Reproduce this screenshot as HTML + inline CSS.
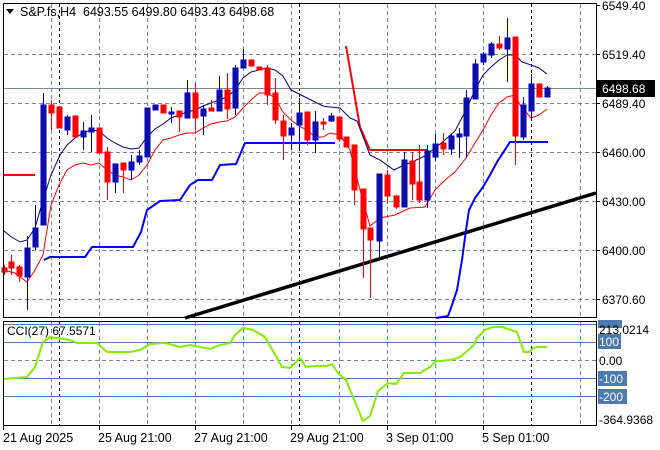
<!DOCTYPE html>
<html><head><meta charset="utf-8"><style>
html,body{margin:0;padding:0;background:#fff;}
svg{display:block;font-family:"Liberation Sans",Tahoma,sans-serif;}
</style></head><body>
<svg width="660" height="450" viewBox="0 0 660 450" xmlns="http://www.w3.org/2000/svg">
<rect width="660" height="450" fill="#fff"/>
<g stroke="#7a8694" stroke-width="1" stroke-dasharray="4,3" fill="none">
<path d="M4 54.5H596M4 103.5H596M4 152.5H596M4 201.5H596M4 250.5H596M4 299.5H596"/>
<path d="M51.5 4V317M99.5 4V317M147.5 4V317M195.5 4V317M243.5 4V317M291.5 4V317M339.5 4V317M387.5 4V317M435.5 4V317M483.5 4V317M580.5 4V317"/>
<path d="M51.5 322V425M99.5 322V425M147.5 322V425M195.5 322V425M243.5 322V425M291.5 322V425M339.5 322V425M387.5 322V425M435.5 322V425M483.5 322V425M580.5 322V425M4 360.5H596"/>
</g>
<g stroke="#000" stroke-width="1" stroke-dasharray="3,3" fill="none">
<path d="M59.5 4V317M299.5 4V317M531.5 4V317M59.5 322V425M299.5 322V425M531.5 322V425"/>
</g>
<path d="M4 88.5H596" stroke="#7a8694" stroke-width="1"/>
<path d="M185 318L596 193" stroke="#000" stroke-width="3.5"/>
<path d="M3 175H35M346 46L360 127L370 150L427 150" stroke="#f00" stroke-width="2" fill="none"/>
<path d="M44 260L50 257L85 257L92 247L133 247L141 232L147 210L160 201L180 200L190 185L198 180L212 180L220 165L236 164L245 143L335 143" stroke="#0000ff" stroke-width="2" fill="none"/>
<path d="M436 318L448 316L452 305L457 290L462 260L466 230L469 210L475 198L483 187L490 175L497 162L510 142L548 142" stroke="#0000ff" stroke-width="2" fill="none"/>
<path d="M3 230L10 236L20 242L27 240L35 228L43 200L51 175L60 155L67 145L75 138L83 133L91 130L99 131L107 138L115 143L123 147L131 149L139 148L147 137L155 129L163 124L171 118L179 115L187 112L195 110L203 106L211 103L219 100L227 97L235 90L243 78L251 72L259 70L267 68L275 70L283 76L291 90L299 94L307 98L315 102L323 106L330 107L340 108L350 118L357 121L370 155L380 160L394 170L402 166L412 162L425 156L435 148L445 140L455 131L466 110L475 90L483 75L491 67L499 60L507 55L515 55L522 62L531 65L539 68L547 74" stroke="#000080" stroke-width="1" fill="none"/>
<path d="M3 270L15 273L27 282L35 270L43 255L51 205L59 185L67 170L75 165L83 163L91 165L99 163L107 170L115 175L123 177L131 180L139 175L147 165L155 150L163 140L171 138L179 135L187 133L195 133L203 128L211 124L219 122L227 121L235 117L243 108L251 100L259 93L267 93L275 98L283 112L291 120L299 126L307 130L315 137L323 137L330 133L340 135L350 150L360 190L370 226L380 218L395 215L410 208L425 207L435 190L445 180L455 172L466 158L475 143L483 130L491 115L499 103L507 97L515 95L520 105L531 118L539 115L547 109" stroke="#f00" stroke-width="1" fill="none"/>
<g stroke="#f00" stroke-width="1" fill="#f00">
<path d="M4.5 265V275M11.5 255V275M19.5 265V282M51.5 100V130M59.5 107V128M75.5 116V137M99.5 128V153M107.5 147V200M123.5 163V193M163.5 105V113M179.5 111V132M195.5 83V130M211.5 100V111M227.5 73V119M251.5 60V66M259.5 67V70M267.5 65V105M275.5 78V124M283.5 115V160M307.5 112V145M323.5 118V130M339.5 117V142M346.5 137V147M354.5 145V205M363.5 189V278M370.5 228V298M387.5 170V203M396.5 195V209M412.5 152V200M419.5 145V203M443.5 133V155M499.5 36V50M515.5 37V165M539.5 84V97" fill="none"/>
<rect x="2" y="268" width="5" height="4"/><rect x="9" y="262" width="5" height="6"/><rect x="17" y="267" width="5" height="9"/><rect x="49" y="105" width="5" height="8"/><rect x="57" y="107" width="5" height="21"/><rect x="73" y="116" width="5" height="21"/><rect x="97" y="128" width="5" height="25"/><rect x="105" y="152" width="5" height="30"/><rect x="121" y="163" width="5" height="7"/><rect x="161" y="105" width="5" height="8"/><rect x="177" y="111" width="5" height="6"/><rect x="193" y="93" width="5" height="25"/><rect x="209" y="108" width="5" height="3"/><rect x="225" y="90" width="5" height="19"/><rect x="249" y="60" width="5" height="6"/><rect x="257" y="67" width="5" height="3"/><rect x="265" y="68" width="5" height="27"/><rect x="273" y="93" width="5" height="27"/><rect x="281" y="121" width="5" height="15"/><rect x="305" y="112" width="5" height="28"/><rect x="321" y="122" width="5" height="2"/><rect x="337" y="117" width="5" height="22"/><rect x="344" y="137" width="5" height="10"/><rect x="352" y="145" width="5" height="45"/><rect x="361" y="189" width="5" height="40"/><rect x="368" y="228" width="5" height="12"/><rect x="385" y="175" width="5" height="21"/><rect x="394" y="196" width="5" height="11"/><rect x="410" y="161" width="5" height="23"/><rect x="417" y="182" width="5" height="18"/><rect x="441" y="143" width="5" height="6"/><rect x="497" y="44" width="5" height="4"/><rect x="513" y="37" width="5" height="99"/><rect x="537" y="84" width="5" height="13"/>
</g>
<g stroke="#0000c0" stroke-width="1" fill="#1010a0">
<path d="M27.5 236V310M35.5 205V250M43.5 93V225M67.5 115V135M83.5 122V150M91.5 115V152M115.5 164V193M131.5 155V180M139.5 150V165M147.5 108V157M155.5 105V110M171.5 107V123M187.5 80V118M203.5 105V135M219.5 76V111M235.5 65V115M243.5 49V68M291.5 123V150M299.5 98V150M315.5 111V153M331.5 113V122M379.5 174V258M404.5 152V207M427.5 145V208M435.5 134V161M451.5 134V155M459.5 128V158M466.5 90V158M475.5 59V99M483.5 52V65M491.5 42V58M507.5 18V82M523.5 97V140M531.5 74V120M547.5 86V97" fill="none"/>
<rect x="25" y="248" width="5" height="29"/><rect x="33" y="228" width="5" height="19"/><rect x="41" y="105" width="5" height="120"/><rect x="65" y="117" width="5" height="13"/><rect x="81" y="131" width="5" height="6"/><rect x="89" y="128" width="5" height="4"/><rect x="113" y="164" width="5" height="18"/><rect x="129" y="162" width="5" height="8"/><rect x="137" y="156" width="5" height="6"/><rect x="145" y="108" width="5" height="49"/><rect x="153" y="105" width="5" height="5"/><rect x="169" y="112" width="5" height="2"/><rect x="185" y="93" width="5" height="25"/><rect x="201" y="109" width="5" height="7"/><rect x="217" y="90" width="5" height="21"/><rect x="233" y="68" width="5" height="40"/><rect x="241" y="60" width="5" height="8"/><rect x="289" y="128" width="5" height="7"/><rect x="297" y="113" width="5" height="12"/><rect x="313" y="122" width="5" height="18"/><rect x="329" y="116" width="5" height="5"/><rect x="377" y="174" width="5" height="67"/><rect x="402" y="160" width="5" height="47"/><rect x="425" y="151" width="5" height="49"/><rect x="433" y="144" width="5" height="13"/><rect x="449" y="136" width="5" height="13"/><rect x="457" y="134" width="5" height="3"/><rect x="464" y="98" width="5" height="38"/><rect x="473" y="64" width="5" height="35"/><rect x="481" y="54" width="5" height="8"/><rect x="489" y="44" width="5" height="11"/><rect x="505" y="38" width="5" height="11"/><rect x="521" y="105" width="5" height="32"/><rect x="529" y="84" width="5" height="27"/><rect x="545" y="88" width="5" height="9"/>
</g>
<g stroke="#4a7ab0" stroke-width="1">
<path d="M4 324.5H596M4 342.5H596M4 378.5H596M4 396.5H596"/>
</g>
<path d="M3 379L27 377L35 367L43 342L50 337L57 338L70 340L77 343L97 343L107 352L115 352L130 352L140 350L150 344L165 343L180 347L190 345L200 347L210 349L220 345L230 343L235 335L243 328L253 330L265 337L282 367L290 368L300 358L306 367L316 366L327 366L332 364L338 373L346 380L355 402L363 421L370 416L378 391L388 383L396 384L404 373L420 373L430 367L436 361L442 361L454 359L460 357L466 352L474 345L477 338L485 330L493 327L502 327L508 329L517 332L524 352L530 352L533 348L537 347L547 347" stroke="#80f000" stroke-width="2" fill="none"/>
<rect x="3.5" y="3.5" width="593" height="314" fill="none" stroke="#000" stroke-width="1"/>
<rect x="3.5" y="321.5" width="593" height="104" fill="none" stroke="#000" stroke-width="1"/>
<g stroke="#000"><path d="M596 54.5H600M596 103.5H600M596 152.5H600M596 201.5H600M596 250.5H600M596 299.5H600M596 5.5H600M3.5 426V430M99.5 426V430M195.5 426V430M291.5 426V430M387.5 426V430M483.5 426V430"/></g>
<path d="M6 9L14 9L10 14Z" fill="#000"/>
<text x="20" y="16" font-size="12.5" fill="#000" xml:space="preserve">S&amp;P.fs,H4  6493.55 6499.80 6493.43 6498.68</text>
<text x="7" y="335" font-size="12" fill="#000">CCI(27) 67.5571</text>
<g font-size="12" fill="#000">
<text x="602" y="10">6549.40</text>
<text x="602" y="59">6519.40</text>
<text x="602" y="108">6489.40</text>
<text x="602" y="157">6460.00</text>
<text x="602" y="206">6430.00</text>
<text x="602" y="255">6400.00</text>
<text x="602" y="304">6370.60</text>
</g>
<rect x="597" y="80" width="58" height="17" fill="#000"/>
<text x="602" y="93" font-size="12" fill="#fff">6498.68</text>
<rect x="598" y="320" width="24" height="8" fill="#4a7ab0"/>
<rect x="598" y="334" width="23" height="15" fill="#4a7ab0"/>
<rect x="598" y="371" width="29" height="15" fill="#4a7ab0"/>
<rect x="598" y="389" width="29" height="15" fill="#4a7ab0"/>
<g font-size="12">
<text x="599" y="334" fill="#000">213.0214</text>
<text x="599" y="346" fill="#fff">100</text>
<text x="599" y="365" fill="#000">0.00</text>
<text x="599" y="383" fill="#fff">-100</text>
<text x="599" y="401" fill="#fff">-200</text>
<text x="599" y="424" fill="#000">-364.9368</text>
</g>
<g font-size="12.5" fill="#000">
<text x="3" y="442">21 Aug 2025</text>
<text x="98" y="442">25 Aug 21:00</text>
<text x="194" y="442">27 Aug 21:00</text>
<text x="290" y="442">29 Aug 21:00</text>
<text x="386" y="442">3 Sep 01:00</text>
<text x="482" y="442">5 Sep 01:00</text>
</g>
</svg>
</body></html>
